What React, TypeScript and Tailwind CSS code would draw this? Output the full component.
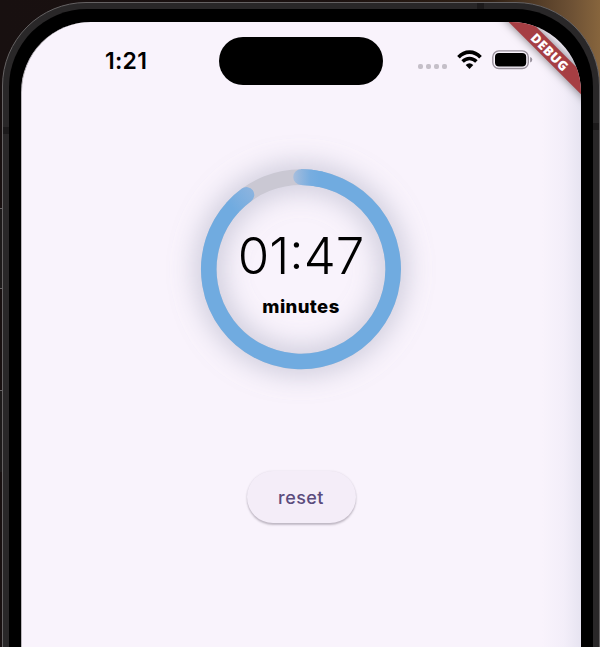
function StatusBar() {
  return (
    <header className="flex h-[78px] items-start">
      <div className="w-[197px] pl-[83px] pt-[23px] font-['Inter',sans-serif] text-[23px] font-semibold leading-[32px] tracking-[0.25px]">
        1:21
      </div>
      <div className="mt-[14.5px] h-[48px] w-[164px] rounded-full bg-black" />
      <div className="ml-[35px] mt-[27.5px] flex items-start">
        <div className="mt-[14px] flex gap-[3px]">
          <i className="size-[5px] rounded-[2px] bg-[#c5bfc8]" />
          <i className="size-[5px] rounded-[2px] bg-[#c5bfc8]" />
          <i className="size-[5px] rounded-[2px] bg-[#c5bfc8]" />
          <i className="size-[5px] rounded-[2px] bg-[#c5bfc8]" />
        </div>
        <svg className="ml-[9.5px]" width="25" height="20" viewBox="0 0 25 20" fill="none" stroke="#000">
          <path d="M1.5 7.2C7.7.4 17.3.4 23.5 7.2" strokeWidth="3.6" />
          <path d="M5.6 11.5C9.5 7.4 15.5 7.4 19.4 11.5" strokeWidth="3.4" />
          <path d="M8.7 14.9Q12.5 11.5 16.3 14.9L12.5 19Z" fill="#000" stroke="none" />
        </svg>
        <svg className="ml-[10px]" width="42" height="20" viewBox="0 0 42 20">
          <rect x=".8" y=".9" width="35.5" height="17.6" rx="6" fill="none" stroke="#98909b" strokeWidth="1.4" />
          <rect x="3" y="3.1" width="31.2" height="13.3" rx="4" />
          <path d="M38.1 6.9Q40.3 7.7 40.3 9.7T38.1 12.5Z" fill="#98909b" />
        </svg>
      </div>
    </header>
  );
}

function Timer() {
  return (
    <section className="relative mt-[69px] flex size-[200px] flex-col items-center rounded-full">
      <svg className="absolute -left-[60px] -top-[60px]" width="320" height="320" viewBox="0 0 320 320" fill="none">
        <defs>
          <filter id="ring-shadow" x="0" y="0" width="320" height="320" filterUnits="userSpaceOnUse">
            <feGaussianBlur stdDeviation="14" />
          </filter>
          <linearGradient id="start-fade" x1="152" y1="0" x2="179" y2="0" gradientUnits="userSpaceOnUse">
            <stop stopColor="#a9bfdd" />
            <stop offset=".25" stopColor="#94b7de" />
            <stop offset=".65" stopColor="#77ade0" />
            <stop offset="1" stopColor="#70abe0" />
          </linearGradient>
          <linearGradient id="end-fade" x1="92" y1="100" x2="112" y2="84" gradientUnits="userSpaceOnUse">
            <stop stopColor="#70abe0" />
            <stop offset="1" stopColor="#8ab3df" />
          </linearGradient>
        </defs>
        <circle cx="160" cy="160.3" r="92.2" stroke="#9294ae" strokeOpacity=".5" strokeWidth="23" filter="url(#ring-shadow)" />
        <circle cx="160" cy="160.3" r="92.2" stroke="#cac8d3" strokeWidth="15.6" />
        <g transform="translate(0 .3)">
          <path d="M160 67.8A92.2 92.2 0 1 1 92 97.7" stroke="#70abe0" strokeWidth="15.6" />
          <path d="M92 97.7A92.2 92.2 0 0 1 105.5 85.6" stroke="url(#end-fade)" strokeWidth="15.6" strokeLinecap="round" />
          <path d="M160 67.8L160.1 67.8A92.2 92.2 0 0 1 180 70" stroke="url(#start-fade)" strokeWidth="15.6" strokeLinecap="round" />
        </g>
      </svg>
      <div className="relative mt-[61px] whitespace-nowrap font-['Inter',sans-serif] text-[51px] font-light leading-[52px]">
        01:47
      </div>
      <div className="relative mt-[12px] font-['Inter',sans-serif] text-[18.5px] font-extrabold leading-[24px] tracking-[0.4px]">
        minutes
      </div>
    </section>
  );
}

export default function App() {
  return (
    <div className="relative h-[647px] w-[600px] overflow-hidden bg-[linear-gradient(90deg,#181010_0%,#1b1110_55%,#302014_82%,#6c5034_95%,#87653d_100%)] pl-[2px] pt-[2px]">
      <div className="absolute left-0 top-[208px] h-[81px] w-[2px] border-y border-[#656263] bg-[#1d1a1a]" />
      <div className="absolute left-0 top-[390px] h-[82px] w-[2px] border-t border-[#656263] bg-[#1d1a1a]" />
      <div className="relative h-[800px] w-[598px] rounded-[84px] border border-[#656263] bg-[#292728] pl-[6px] pr-[6px] pt-[6px]">
        <div className="absolute left-0 top-[124px] h-[7px] w-[6px] bg-[#1c1a1b]" />
        <div className="absolute right-0 top-[120px] h-[7px] w-[6px] bg-[#1c1a1b]" />
        <div className="absolute left-[474px] top-0 h-[6px] w-[7px] bg-[#1c1a1b]" />
        <div className="h-[790px] rounded-[78px] bg-black pl-[12px] pr-[13px] pt-[13px]">
          <main className="relative h-[770px] w-[560px] overflow-hidden rounded-[70px] border-l border-[#bcb7bd] bg-[linear-gradient(90deg,#f9f3fc_0%,#f9f3fc_93%,#f3eef9_97%,#e7e4f1_100%)] text-black">
            <StatusBar />
            <div className="flex w-[558px] flex-col items-center">
              <Timer />
              <button className="mt-[102px] h-[52px] w-[109px] rounded-full bg-[#f4edf8] font-['Inter',sans-serif] text-[18px] font-medium tracking-[0.45px] text-[#5b4c7d] shadow-[0_2px_2px_rgba(60,50,70,0.28),0_0_2px_rgba(60,50,70,0.12)]">
                reset
              </button>
            </div>
            <div className="absolute left-[463px] top-[22px] flex h-[16px] w-[130px] rotate-45 items-center justify-center bg-[#a63e43] font-['Open_Sans',sans-serif] text-[13px] font-extrabold leading-none tracking-[0.5px] text-white shadow-[0_0_10px_rgba(0,0,0,0.5)]">
              DEBUG
            </div>
          </main>
        </div>
      </div>
    </div>
  );
}
